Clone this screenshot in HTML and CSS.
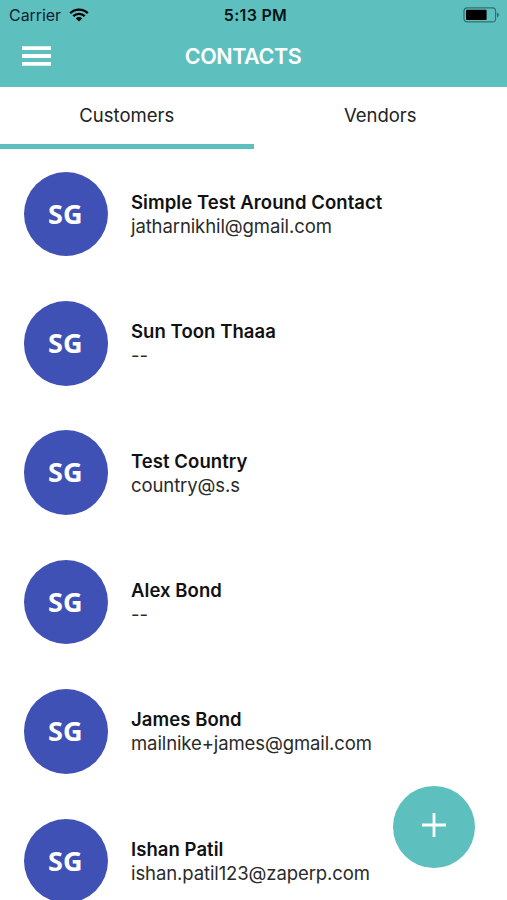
FILE: index.html
```html
<!DOCTYPE html>
<html lang="en">
<head>
  <meta charset="UTF-8" />
  <meta name="viewport" content="width=device-width, initial-scale=1" />
  <title>Contacts</title>
  <link rel="stylesheet" href="styles.css">
</head>
<body>

<header>
  <div class="status-bar">
    <div class="carrier">
      <span>Carrier</span>
      <svg class="wifi" width="20" height="14" viewBox="0 0 20 14">
        <path d="M1.2 5.2a12.6 12.6 0 0 1 17.6 0" />
        <path d="M4.3 8.2a8.2 8.2 0 0 1 11.4 0" />
        <path class="dot" d="M10 13.6L6.8 10.4a4.7 4.7 0 0 1 6.4 0z" />
      </svg>
    </div>
    <span class="time">5:13 PM</span>
    <svg class="battery" width="37" height="16" viewBox="0 0 37 16">
      <rect class="shell" x="1" y="0.9" width="31.6" height="14" rx="3.2" />
      <rect x="3" y="2.8" width="20.6" height="10.2" rx="1" />
      <path class="tip" d="M34 5.6c2.6 1 2.6 3.8 0 4.8z" />
    </svg>
  </div>
  <div class="title-bar">
    <button class="menu" aria-label="Menu">
      <svg width="29" height="20" viewBox="0 0 29 20">
        <path d="M0 2.2h29M0 10h29M0 17.8h29" />
      </svg>
    </button>
    <h1>CONTACTS</h1>
  </div>
</header>

<nav>
  <a class="active">Customers</a>
  <a>Vendors</a>
</nav>

<main>
  <section class="contact">
    <div class="avatar">SG</div>
    <div class="info">
      <h2>Simple Test Around Contact</h2>
      <p>jatharnikhil@gmail.com</p>
    </div>
  </section>
  <section class="contact">
    <div class="avatar">SG</div>
    <div class="info">
      <h2>Sun Toon Thaaa</h2>
      <p>--</p>
    </div>
  </section>
  <section class="contact">
    <div class="avatar">SG</div>
    <div class="info">
      <h2>Test Country</h2>
      <p>country@s.s</p>
    </div>
  </section>
  <section class="contact">
    <div class="avatar">SG</div>
    <div class="info">
      <h2>Alex Bond</h2>
      <p>--</p>
    </div>
  </section>
  <section class="contact">
    <div class="avatar">SG</div>
    <div class="info">
      <h2>James Bond</h2>
      <p>mailnike+james@gmail.com</p>
    </div>
  </section>
  <section class="contact">
    <div class="avatar">SG</div>
    <div class="info">
      <h2>Ishan Patil</h2>
      <p>ishan.patil123@zaperp.com</p>
    </div>
  </section>
</main>

<button class="add" aria-label="Add contact">
  <svg width="24" height="24" viewBox="0 0 24 24">
    <path d="M12 0v24M0 12h24" />
  </svg>
</button>

</body>
</html>
```

FILE: styles.css
```css
* {
  box-sizing: border-box;
}
body {
  font-family: Inter, "Liberation Sans", sans-serif;
  margin: 0;
  height: 900px;
  overflow: hidden;
  background-color: #fff;
  color: #111;
}
h1, h2, p {
  margin: 0;
}
button {
  border: 0;
  padding: 0;
  background: none;
}
svg {
  display: block;
}
/* Header */
header {
  height: 87px;
  background-color: #5dc0be;
}
.status-bar {
  display: grid;
  grid-template-columns: 1fr auto 1fr;
  align-items: center;
  height: 29px;
  padding: 0 7px 0 9px;
  font-size: 16px;
  line-height: 20px;
  color: #123;
}
.carrier {
  display: flex;
  align-items: center;
  gap: 8px;
}
.carrier span {
  letter-spacing: -0.05px;
}
.wifi {
  fill: none;
  stroke: #000;
  stroke-width: 2.4;
}
.wifi .dot {
  fill: #000;
  stroke: none;
}
.time {
  padding-left: 2px;
  font-weight: 600;
  letter-spacing: 0.3px;
  color: #061414;
}
.battery {
  justify-self: end;
}
.battery .shell {
  fill: none;
  stroke: #32706f;
  stroke-width: 1.2;
}
.battery .tip {
  fill: #32706f;
}
.title-bar {
  display: grid;
  grid-template-columns: 1fr auto 1fr;
  align-items: center;
  height: 54px;
  padding: 0 43px 0 22px;
}
.menu svg {
  stroke: #fff;
  stroke-width: 3.8;
}
h1 {
  font-size: 21.5px;
  font-weight: 600;
  letter-spacing: -0.4px;
  color: #fff;
}
/* Tabs */
nav {
  display: flex;
  height: 62px;
}
nav a {
  flex: 1;
  padding-top: 16px;
  font-size: 18.5px;
  line-height: 24px;
  text-align: center;
  color: #222;
  border-bottom: 5px solid transparent;
}
nav a.active {
  border-bottom-color: #5dc0be;
}
/* Contact list */
.contact {
  display: flex;
  align-items: center;
  gap: 23px;
  height: 129.4px;
  padding: 0.5px 23.5px 0;
}
.avatar {
  width: 84.5px;
  height: 84.5px;
  border-radius: 50%;
  background-color: #3f51b5;
  color: #fff;
  font: bold 27px/84.5px "Noto Sans", sans-serif;
  text-align: center;
  text-indent: -1px;
}
.info {
  padding-bottom: 0.3px;
}
.info h2 {
  font-size: 18.5px;
  font-weight: 600;
  line-height: 24px;
  letter-spacing: 0.06px;
}
.info p {
  font-size: 18.5px;
  line-height: 24px;
  letter-spacing: -0.1px;
  color: #2a2a2a;
}
/* Floating button */
.add {
  position: absolute;
  right: 32px;
  bottom: 32px;
  display: flex;
  align-items: center;
  justify-content: center;
  width: 82px;
  height: 82px;
  padding-bottom: 4px;
  border-radius: 50%;
  background-color: #5dc0be;
}
.add svg {
  stroke: #fff;
  stroke-width: 2.8;
}
```
